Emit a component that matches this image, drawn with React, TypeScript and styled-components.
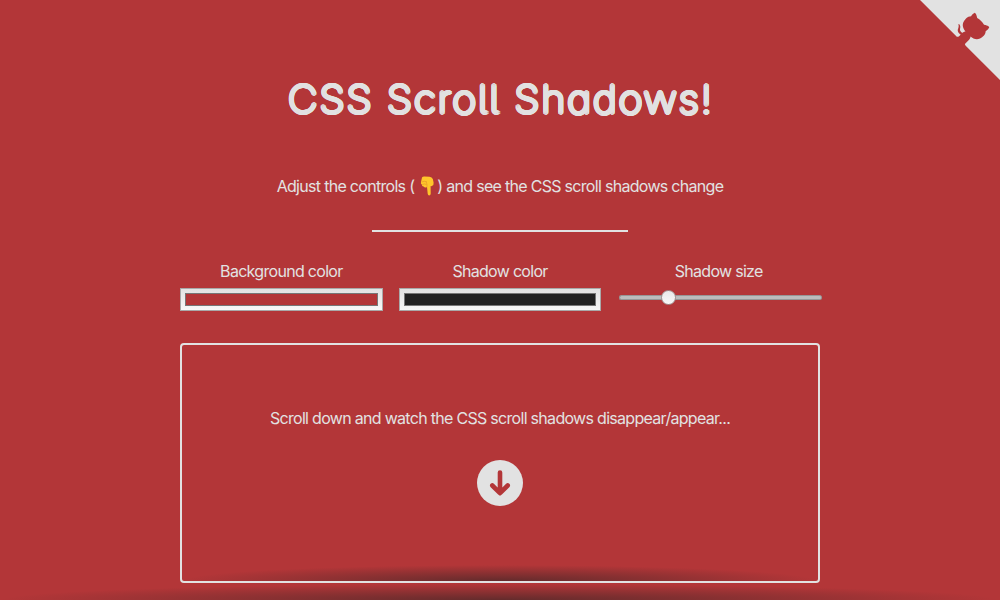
import React from 'react';
import styled, { createGlobalStyle } from 'styled-components';

const bg = '#b33638';
const fg = '#e2e2e2';

const GlobalStyle = createGlobalStyle`
  * { box-sizing: border-box; }
  html, body { margin: 0; height: 100%; overflow: hidden; }
  body {
    background: ${bg};
    color: ${fg};
    font: 16px/24px Inter, "Liberation Sans", sans-serif;
  }
`;

const shadow = `radial-gradient(farthest-side at 50% 100%, rgba(34, 34, 34, 0.55), rgba(34, 34, 34, 0))`;

/* A ring of offset copies thickens thin strokes and rounds their ends. */
const roundedOutline = (radius: number) =>
  Array.from({ length: 16 }, (_, i) => {
    const a = (i / 16) * Math.PI * 2;
    return `${(Math.cos(a) * radius).toFixed(2)}px ${(Math.sin(a) * radius).toFixed(2)}px 0 ${fg}`;
  }).join(', ');

const Page = styled.main`
  position: relative;
  height: 600px;
  overflow: hidden;
  display: flex;
  flex-direction: column;
  align-items: center;
  background: ${shadow} center bottom / 100% 16px no-repeat, ${bg};
`;

const Corner = styled.a`
  position: absolute;
  top: 0;
  right: 0;
  width: 80px;
  height: 80px;
  svg { display: block; }
`;

const Title = styled.h1`
  margin: 69px 0 0;
  padding-left: 2px;
  height: 61px;
  font-size: 38.5px;
  line-height: 61px;
  font-weight: 100;
  letter-spacing: 1.9px;
  font-feature-settings: "cv11", "cv05";
  text-shadow: ${roundedOutline(1.9)};
  transform: scaleX(1.06);
  white-space: nowrap;
`;

const Text = styled.p<{ $top: number; $spacing: number }>`
  margin: ${(p) => p.$top}px 0 0;
  letter-spacing: ${(p) => p.$spacing}px;
  white-space: nowrap;
`;

const Hand = styled.svg`
  display: inline-block;
  width: 18px;
  height: 20px;
  margin: 0 0 0 5px;
  vertical-align: -4px;
`;

const Rule = styled.hr`
  width: 256px;
  height: 2px;
  margin: 32px 0 0;
  border: 0;
  background: ${fg};
`;

const Controls = styled.div`
  display: grid;
  grid-template-columns: repeat(3, 1fr);
  gap: 16px;
  width: 640px;
  margin-top: 27px;
`;

const Control = styled.label`
  display: flex;
  flex-direction: column;
  align-items: center;
  letter-spacing: -0.7px;
`;

const Swatch = styled.span`
  width: 100%;
  height: 23px;
  margin-top: 5px;
  padding: 4px;
  border: 1px solid #a9a9a9;
  background: linear-gradient(#e2e2e2, #f8f8f8);
`;

const SwatchColor = styled.span<{ $color: string }>`
  display: block;
  height: 100%;
  border: 1px solid #777;
  background: ${(p) => p.$color};
`;

const Slider = styled.span`
  align-self: stretch;
  display: flex;
  align-items: center;
  height: 15px;
  margin: 7px -2px 0 2px;
`;

const Track = styled.span<{ $grow?: boolean }>`
  flex: ${(p) => (p.$grow ? '1' : '0 0 43px')};
  height: 5px;
  border: 1px solid #969696;
  border-radius: ${(p) => (p.$grow ? '0 3px 3px 0' : '3px 0 0 3px')};
  border-${(p) => (p.$grow ? 'left' : 'right')}: 0;
  background: #bcbcbc;
`;

const Thumb = styled.span`
  width: 15px;
  height: 15px;
  margin: 0 -1px;
  z-index: 1;
  border: 1px solid #a0908f;
  border-radius: 50%;
  background: linear-gradient(#e9e9e9, #f8f8f8);
`;

const ScrollBox = styled.section`
  display: flex;
  flex-direction: column;
  align-items: center;
  width: 640px;
  height: 240px;
  margin-top: 32px;
  border: 2px solid ${fg};
  border-radius: 4px;
  background: ${shadow} center bottom / 100% 16px no-repeat, ${bg};
`;

const DownArrow = styled.svg`
  width: 46px;
  height: 46px;
  margin-top: 30px;
`;

export default function App() {
  return (
    <>
      <GlobalStyle />
      <Page>
        <Corner aria-label="View source on GitHub">
          <svg width="80" height="80" viewBox="0 0 250 250" fill={bg}>
            <path d="M0,0 L115,115 L130,115 L142,142 L250,250 L250,0 Z" fill={fg} />
            <path d="M128.3,109.0 C113.8,99.7 119.0,89.6 119.0,89.6 C122.0,82.7 120.5,78.6 120.5,78.6 C119.2,72.0 123.4,76.3 123.4,76.3 C127.3,80.9 125.5,87.3 125.5,87.3 C122.9,97.6 130.6,101.9 134.4,103.2" />
            <path d="M115.0,115.0 C114.9,115.1 118.7,116.5 119.8,115.4 L133.7,101.6 C136.9,99.2 139.9,98.4 142.2,98.6 C133.8,88.0 127.5,74.4 143.8,58.0 C148.5,53.4 154.0,51.2 159.7,51.0 C160.3,49.4 163.2,43.6 171.4,40.1 C171.4,40.1 176.1,42.5 178.8,56.2 C183.1,58.6 187.2,61.8 190.9,65.4 C194.5,69.0 197.7,73.2 200.1,77.6 C213.8,80.2 216.3,84.9 216.3,84.9 C212.7,93.1 206.9,96.0 205.4,96.6 C205.1,102.4 203.0,107.8 198.3,112.5 C181.9,128.9 168.3,122.5 157.7,114.1 C157.9,116.9 156.7,120.9 152.7,124.9 L141.0,136.5 C139.8,137.7 141.6,141.9 141.8,141.8 Z" />
          </svg>
        </Corner>
        <Title>CSS Scroll Shadows!</Title>
        <Text $top={44} $spacing={-0.7}>
          Adjust the controls (
          <Hand viewBox="0 0 18 20" role="img" aria-label="pointing down">
            <path d="M3 1.6 Q3.6 .5 5.5 .6 L10.5 .8 Q13 1 13.8 3 L14.6 6.5 Q14.9 9 13.2 9.8 Q12.4 10.4 11.6 9.9 L11.7 17.8 Q11.5 19.5 10.2 19.5 Q8.9 19.5 8.7 17.8 L8 11 Q6 12.3 4.6 10.6 Q2.8 10.4 2.8 8.6 Q1.5 7.8 2 6 Z" fill="#ffc62b" />
            <path d="M3 5.8 Q5.3 4.7 7.2 5.6 M3.5 8.5 Q5.5 7.3 7.2 8.3 M8 10.8 Q8.5 8.8 7.2 5.6" fill="none" stroke="#e8982a" strokeWidth=".7" strokeLinecap="round" />
          </Hand>
          ) and see the CSS scroll shadows change
        </Text>
        <Rule />
        <Controls>
          <Control>
            Background color
            <Swatch><SwatchColor $color={bg} /></Swatch>
          </Control>
          <Control>
            Shadow color
            <Swatch><SwatchColor $color="#222222" /></Swatch>
          </Control>
          <Control>
            Shadow size
            <Slider>
              <Track />
              <Thumb />
              <Track $grow />
            </Slider>
          </Control>
        </Controls>
        <ScrollBox>
          <Text $top={61} $spacing={-0.7}>
            Scroll down and watch the CSS scroll shadows disappear/appear...
          </Text>
          <DownArrow viewBox="0 0 46 46">
            <circle cx="23" cy="23" r="23" fill={fg} />
            <path d="M23 12.5 V33 M15.3 25.5 L23 33.2 L30.7 25.5" fill="none" stroke={bg} strokeWidth="4.6" strokeLinecap="round" strokeLinejoin="round" />
          </DownArrow>
        </ScrollBox>
      </Page>
    </>
  );
}
